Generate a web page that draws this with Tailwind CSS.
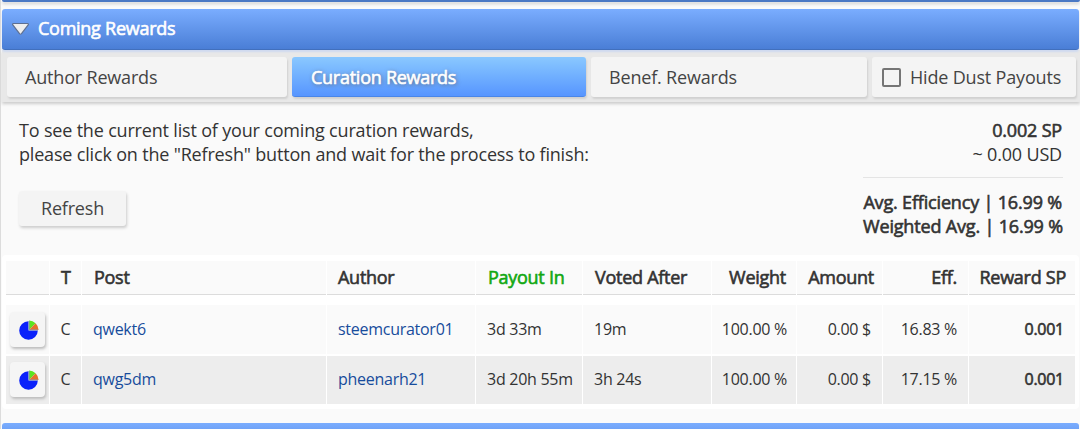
<!DOCTYPE html>
<html lang="en">
<head>
<meta charset="utf-8">
<title>Coming Rewards</title>
<script src="https://cdn.jsdelivr.net/npm/@tailwindcss/browser@4"></script>
</head>
<body class="w-[1080px] h-[429px] overflow-hidden bg-[#fafafa] font-['Open_Sans','Noto_Sans',sans-serif] text-[18px] tracking-[-0.18px] leading-6 text-[#333]">
<div class="flex h-[429px] flex-col border-l border-[#dcdcdc] pl-px">
  <div class="h-0.5 shrink-0 rounded-b-[3px] bg-[#4a78c4] shadow-[0_2px_3px_#ccc]"></div>
  <header class="mt-[7px] mr-px flex h-[41px] shrink-0 items-center rounded-[3px] border-b border-[#4270bd] bg-linear-to-b from-[#7aadff] to-[#4a7ed6] pl-[9px] shadow-[0_2px_2px_#cfdaf0] relative">
    <svg class="h-[14px] w-[19px]" viewBox="0 0 19 14"><path d="M2.5 1.5H16.5Q18 1.8 17 3.2L10.5 11.7Q9.5 12.8 8.5 11.7L2 3.2Q1 1.8 2.5 1.5Z" fill="#eee" stroke="#5d6f91" stroke-width="1.2"/></svg>
    <h1 class="ml-2 pb-[3px] tracking-[-0.26px] text-white [-webkit-text-stroke:0.6px_white]">Coming Rewards</h1>
  </header>
  <nav class="flex h-[52px] shrink-0 gap-[5px] bg-[#e8e8e8] pt-[7px] pl-[5px] shadow-[0_2px_3px_#ccc]">
    <div class="h-10 w-[280px] rounded-[3px] bg-[#f4f4f4] pl-[18px] leading-10 text-[#444] shadow-[1px_2px_2px_#d0d0d0]">Author Rewards</div>
    <div class="h-10 w-[294px] rounded-[3px] border-b border-[#4a86e8] bg-linear-to-b from-[#8ac8ff] to-[#5795ff] pl-[19px] leading-10 tracking-[-0.26px] text-white [-webkit-text-stroke:0.6px_white] [text-shadow:1px_1px_4px_#666] shadow-[1px_2px_2px_#d0d0d0]">Curation Rewards</div>
    <div class="h-10 w-[276px] rounded-[3px] bg-[#f4f4f4] pl-[18px] leading-10 text-[#444] shadow-[1px_2px_2px_#d0d0d0]">Benef. Rewards</div>
    <label class="flex h-10 w-[204px] items-center rounded-[3px] bg-[#f4f4f4] pl-[10px] text-[#444] shadow-[1px_2px_2px_#d0d0d0]"><span class="mt-px mr-[9px] size-[19px] rounded-[2px] border-2 border-[#757575]"></span>Hide Dust Payouts</label>
  </nav>
  <section class="flex h-[153px] shrink-0 justify-between pt-[16px] pr-[17px] pl-[17px]">
    <div>
      <p class="whitespace-nowrap">To see the current list of your coming curation rewards,<br>please click on the "Refresh" button and wait for the process to finish:</p>
      <button class="mt-[25px] block h-[35px] w-[107px] rounded-[3px] bg-[#f4f4f4] pb-0.5 tracking-[-0.18px] text-[#444] shadow-[1px_2px_3px_#ccc]">Refresh</button>
    </div>
    <div class="w-[200px] whitespace-nowrap text-right">
      <p class="pr-px [-webkit-text-stroke:0.6px_#333]">0.002 SP</p>
      <p class="pr-px">~ 0.00 USD</p>
      <p class="mt-[11px] border-t border-[#e4e4e4] pt-[12px] pr-px tracking-[-0.17px] [-webkit-text-stroke:0.6px_#333]">Avg. Efficiency | 16.99 %<br>Weighted Avg. | 16.99 %</p>
    </div>
  </section>
  <main class="mr-px h-[154px] shrink-0 rounded-[4px] bg-white pt-[6px] pl-1 tracking-[-0.27px]">
    <div class="grid h-[34px] grid-cols-[43px_31px_244px_148px_106px_128px_84px_85px_85px_106px] gap-px leading-[32px] whitespace-nowrap [-webkit-text-stroke:0.6px] *:border-b *:border-[#dcdcdc] *:bg-[#fafafa]">
      <div></div><div class="pl-[11px]">T</div><div class="pl-[12px]">Post</div><div class="pl-[11px]">Author</div><div class="pl-[12px] text-[#12a812]">Payout In</div><div class="pl-[12px]">Voted After</div><div class="pr-[10px] text-right">Weight</div><div class="pr-[8px] text-right">Amount</div><div class="pr-[11px] text-right">Eff.</div><div class="pr-[9px] text-right">Reward SP</div>
    </div>
    <div class="mt-[10px] grid h-[49px] grid-cols-[43px_31px_244px_148px_106px_128px_84px_85px_85px_106px] gap-px text-[16px] leading-[48px] whitespace-nowrap *:bg-[#fafafa]">
      <div class="pt-[7px] pl-1"><div class="flex size-[35px] items-center justify-center rounded-[4px] bg-[#f5f5f5] pl-0.5 shadow-[1px_2px_3px_#bbb]"><svg class="size-5" viewBox="0 0 20 20"><path d="M9.5 10.5V1.2A9.3 9.3 0 1 0 18.8 10.5Z" fill="#0b22fa"/><path d="M10 10V.4A9.6 9.6 0 0 1 16.6 3.2Z" fill="#5be421"/><path d="M10 10L16.6 3.2A9.6 9.6 0 0 1 19.6 10Z" fill="#e5702c"/><path d="M10 1V10H19" fill="none" stroke="#8495b5"/></svg></div></div>
      <div class="pl-[10.5px]">C</div><div class="pl-[11px] text-[#174c9c]">qwekt6</div><div class="pl-[11px] text-[#174c9c]">steemcurator01</div><div class="pl-[11px]">3d 33m</div><div class="pl-[11px]">19m</div><div class="pr-[9px] text-right">100.00 %</div><div class="pr-[11px] text-right">0.00 $</div><div class="pr-[11px] text-right">16.83 %</div><div class="pr-[11px] text-right [-webkit-text-stroke:0.6px]">0.001</div>
    </div>
    <div class="mt-[2px] grid h-[48px] grid-cols-[43px_31px_244px_148px_106px_128px_84px_85px_85px_106px] gap-px text-[16px] leading-[46px] whitespace-nowrap *:bg-[#ededed]">
      <div class="pt-[6px] pl-1"><div class="flex size-[35px] items-center justify-center rounded-[4px] bg-[#f5f5f5] pl-0.5 shadow-[1px_2px_3px_#bbb]"><svg class="size-5" viewBox="0 0 20 20"><path d="M9.5 10.5V1.2A9.3 9.3 0 1 0 18.8 10.5Z" fill="#0b22fa"/><path d="M10 10V.4A9.6 9.6 0 0 1 16.6 3.2Z" fill="#5be421"/><path d="M10 10L16.6 3.2A9.6 9.6 0 0 1 19.6 10Z" fill="#e5702c"/><path d="M10 1V10H19" fill="none" stroke="#8495b5"/></svg></div></div>
      <div class="pl-[10.5px]">C</div><div class="pl-[11px] text-[#174c9c]">qwg5dm</div><div class="pl-[11px] text-[#174c9c]">pheenarh21</div><div class="pl-[11px]">3d 20h 55m</div><div class="pl-[11px]">3h 24s</div><div class="pr-[9px] text-right">100.00 %</div><div class="pr-[11px] text-right">0.00 $</div><div class="pr-[11px] text-right">17.15 %</div><div class="pr-[11px] text-right [-webkit-text-stroke:0.6px]">0.001</div>
    </div>
  </main>
  <div class="mt-[14px] mr-px h-[6px] shrink-0 rounded-t-[3px] bg-linear-to-b from-[#7aadff] to-[#70a3f7]"></div>
</div>
</body>
</html>
